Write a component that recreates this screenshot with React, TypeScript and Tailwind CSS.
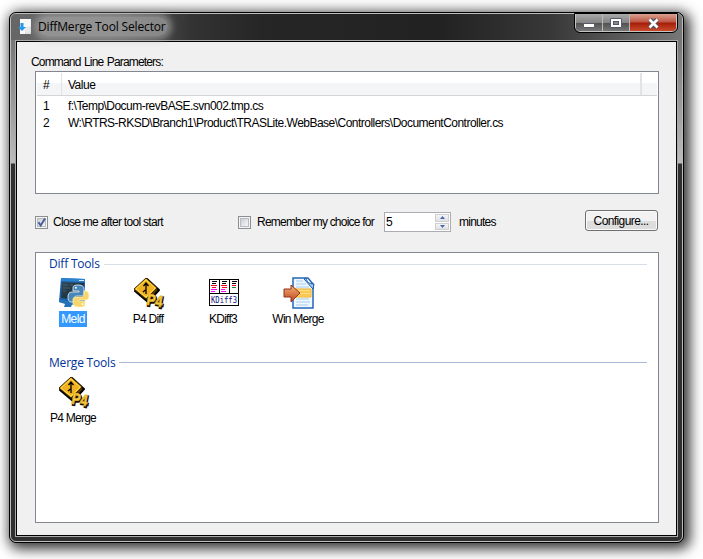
import type { ReactNode } from 'react';

function PythonIcon() {
  return (
    <svg width="32" height="32" viewBox="0 0 32 32" className="block">
      <defs>
        <linearGradient id="screen" x1="0" y1="0" x2="1" y2="1">
          <stop offset="0" stopColor="#334b5a" />
          <stop offset="1" stopColor="#10202c" />
        </linearGradient>
      </defs>
      <path d="M3 1 L27 2 L27 25 L16 28 L1 25 Z" fill="#1c62a9" />
      <path d="M3 1 L27 2 L27 5 L3 4 Z" fill="#2b83cf" />
      <path d="M21 3h5v1h-5z" fill="#d7ebfa" />
      <path d="M4 5 L26 6 L25 23 L3 21 Z" fill="url(#screen)" />
      <path d="M5 8h5M12 8h3M5 11h7M5 14h3" stroke="#445d6b" strokeWidth="1" />
      <path d="M1 22 L15 25 L13 30 L6 30 L7 27 L1 25 Z" fill="#2573b8" />
      <path d="M20 8c-5 0-5 1.500-5 4v2h6v1h-7c-3 0-4 2-4 5s1 5 3 5h3v-3c0-2 1-3 3-3h4c2 0 3-1 3-3v-4c0-2-1-4-6-4z" fill="#4787b8" stroke="#dce8f0" strokeWidth=".9" />
      <path d="M22 30c5 0 5-1.500 5-4v-2h-6v-1h7c2 0 3-2 3-4s-1-5-3-5h-2v3c0 2-1 3-3 3h-5c-2 0-3 1-3 3v3c0 2 1 4 7 4z" fill="#f5d66c" stroke="#fff1b5" strokeWidth=".8" />
      <circle cx="17.800" cy="10.700" r="1" fill="#fff" />
      <circle cx="24.500" cy="27" r="1" fill="#fff" />
    </svg>
  );
}

function P4Icon() {
  return (
    <svg width="32" height="33" viewBox="0 0 32 33" className="block overflow-visible">
      <path d="M14 2 L26 13 L15 25 L2 14 Z" fill="#5b3b00" stroke="#000" strokeWidth="2" strokeLinejoin="round" />
      <path d="M13 1 L24 11 L13 22 L1 12 Z" fill="#f0b020" stroke="#3b2900" strokeWidth="1" strokeLinejoin="round" />
      <path d="M13 3 L22 11 L13 20 L3 12 Z" fill="none" stroke="#ffdc52" strokeWidth="1" />
      <path d="M13 17V7M10.500 9l2.500-3 2.500 3M10 15l2.500-2" fill="none" stroke="#000" strokeWidth="1.300" />
      <g transform="rotate(10 22 22)" className="[font-family:'Liberation_Sans',sans-serif] text-[16px] font-bold">
        <text x="15" y="30" textLength="16" lengthAdjust="spacingAndGlyphs" fill="#170e00" stroke="#170e00" strokeWidth="2">P4</text>
        <text x="14" y="29" textLength="16" lengthAdjust="spacingAndGlyphs" fill="#f7d046" stroke="#e0ad28" strokeWidth=".8">P4</text>
      </g>
    </svg>
  );
}

function KDiffIcon() {
  return (
    <svg width="32" height="32" viewBox="0 0 32 32" shapeRendering="crispEdges" className="block">
      <path d="M1 2h30v27H1z" fill="#000" />
      <path d="M2 3h9v13H2zM12 3h9v13h-9zM22 3h8v13h-8zM2 17h28v11H2z" fill="#fff" />
      <path d="M4 4h5v1h-5zM14 4h5v1h-5zM24 4h5v1h-5zM4 6h4v1h-4zM14 6h4v1h-4zM24 6h4v1h-4z" fill="#000" />
      <path d="M3 8h6v1h-6zM13 8h6v1h-6zM24 8h4v1h-4zM4 10h4v1h-4zM14 10h5v1h-5z" fill="#ff0020" />
      <path d="M24 10h4v1h-4z" fill="#168b39" />
      <path d="M3 12h6v1h-6zM13 12h4v1h-4zM3 14h4v1h-4zM13 14h5v1h-5z" fill="#ff00ff" />
      <text x="3" y="26" textLength="26" lengthAdjust="spacingAndGlyphs" fill="#101080" className="[font-family:'DejaVu_Sans_Mono',monospace] text-[9px]">KDiff3</text>
    </svg>
  );
}

function WinMergeIcon() {
  return (
    <svg width="34" height="32" viewBox="0 0 34 32" className="block">
      <defs>
        <linearGradient id="arrow" x1="0" y1="0" x2="0" y2="1">
          <stop offset="0" stopColor="#f8b178" /><stop offset="1" stopColor="#b9441b" />
        </linearGradient>
      </defs>
      <path d="M11 1h15l5 6v24H11z" fill="#f0f8ff" stroke="#2466bb" strokeWidth="1.500" />
      <path d="M24 1c1 4 3 6 8 6l-1 5-9-10z" fill="#a6cbed" stroke="#1c5aab" />
      <path d="M14 4h7M14 7h10M14 10h13M14 22h13M14 25h14M14 28h12" stroke="#a6cae9" />
      <path d="M12 12h17v8H12z" fill="#ffe17b" stroke="#f2a91f" />
      <path d="M17 15h11M17 18h11" stroke="#f5ae32" />
      <path d="M2 12h7V8l9 8-9 9v-5H2z" fill="url(#arrow)" stroke="#91331d" />
    </svg>
  );
}

function CheckBox({ checked }: { checked?: boolean }) {
  return (
    <span className="flex h-[13px] w-[13px] shrink-0 items-center justify-center border border-[#8e8f8f] bg-[#f4f4f4]">
      <span className="h-[9px] w-[9px] border border-[#b8bdc3] bg-linear-to-br from-[#cbcfd5] to-[#f7f7f7]">
        {checked && (
          <svg width="9" height="9" viewBox="0 0 9 9" className="-mt-px -ml-px block overflow-visible">
            <path d="M1.500 4.200 3.700 7.500 8 .5" fill="none" stroke="#4a5f97" strokeWidth="2" />
          </svg>
        )}
      </span>
    </span>
  );
}

function Group({ name, children, faint }: { name: string; children: ReactNode; faint?: boolean }) {
  return (
    <section className="h-[99px]">
      <div className="flex h-[22px] items-center pr-[11px] pl-[13px]">
        <h2 className="w-[55px] shrink-0 whitespace-nowrap [font-family:'Open_Sans',sans-serif] text-[12px] tracking-[-0.2px] text-[#003399] data-wide:w-[70px]" data-wide={faint ? undefined : true}>{name}</h2>
        <div className={faint ? 'h-px flex-1 bg-[#d5dfe9]' : 'mb-px h-px flex-1 bg-[#a9bad8]'} />
      </div>
      <div className="flex pt-[2px]">{children}</div>
    </section>
  );
}

function Tool({ icon, label, selected }: { icon: ReactNode; label: string; selected?: boolean }) {
  return (
    <div className="flex w-[75px] flex-col items-center">
      <div className="flex h-[34px] items-start justify-center">{icon}</div>
      <span className={selected ? 'mr-px h-[16px] bg-[#3399ff] px-[2px] leading-[16px] tracking-[-0.6px] text-white' : 'mr-px h-[16px] leading-[16px] whitespace-nowrap tracking-[-0.75px]'}>{label}</span>
    </div>
  );
}

export default function App() {
  return (
    <main className="h-[559px] w-[703px] overflow-hidden bg-white pt-[12px] pl-[9px] [font-family:'Liberation_Sans',Arial,sans-serif] text-[12px] text-black">
      <div className="h-[531px] w-[675px] rounded-[7px] border border-black bg-[#303030] shadow-[3px_3px_13px_3px_rgba(0,0,0,0.8)]">
        <div className="h-full rounded-[6px] border border-[#bcbcbc] bg-[linear-gradient(180deg,#777_0px,#777_28px,#bcbcbc_149px,#303030_150px,#303030_100%)] px-[4px]">
          <header className="-mx-[4px] flex h-[26px] justify-between rounded-t-[5px] bg-[linear-gradient(90deg,#666_0,#666_100px,#333_180px,#262626_250px,#222_430px,#383838_540px,#777_100%)]">
            <div className="flex items-start pt-[5px] pl-[7px]">
              <svg width="15" height="17" viewBox="0 0 15 17" className="-mt-px">
                <path d="M2 1h11v15H2z" fill="#f8f8f8" />
                <path d="M7 9h6v7H7z" fill="#ddd" /><path d="M7 11h6M7 13h6M9 9v7M11 9v7" stroke="#fff" strokeWidth=".5" />
                <path d="M2.500 5h3v4h2.500L4 13 0 9h2.500z" fill="#2498e9" />
              </svg>
              <h1 className="-mt-[2px] ml-[5px] h-[19px] w-[130px] rounded-full bg-[#aaa]/65 [font-family:'Open_Sans',sans-serif] text-[12px] leading-[19px] tracking-[-0.15px] whitespace-nowrap shadow-[0_0_6px_4px_rgba(170,170,170,.6)]">DiffMerge Tool Selector</h1>
            </div>
            <div className="mr-[5px] flex h-[18px] overflow-hidden rounded-b-[5px] border border-t-0 border-[#c4c4c4] outline outline-black">
              <div className="flex w-[27px] items-center justify-center border-r border-[#bbb] bg-[linear-gradient(180deg,#aaa_0%,#858585_50%,#505050_52%,#777_100%)]"><span className="mt-[6px] h-[5px] w-[12px] rounded-[1px] border border-[#555968] bg-white" /></div>
              <div className="flex w-[27px] items-center justify-center border-r border-[#bbb] bg-[linear-gradient(180deg,#aaa_0%,#858585_50%,#505050_52%,#777_100%)]">
                <span className="mt-px h-[10px] w-[12px] rounded-[1px] border border-[#555968] bg-white p-[2px]"><span className="block h-full border border-[#555968] bg-[#888]" /></span>
              </div>
              <div className="flex w-[46px] items-center justify-center bg-[linear-gradient(180deg,#dba090_0%,#bd5542_48%,#a51d09_52%,#c94b2b_100%)]">
                <svg width="13" height="11" viewBox="0 0 13 11" className="mt-px"><path d="M3 1.500 10 9.500M10 1.500 3 9.500" stroke="#4e5365" strokeWidth="4.800" /><path d="M2.500 1.500 10.500 9.500M10.500 1.500 2.500 9.500" stroke="#fff" strokeWidth="2.600" /></svg>
              </div>
            </div>
          </header>
          <div className="h-[497px] border border-[#aaa] bg-black p-px">
            <div className="h-full bg-[#f0f0f0] px-[18px] pt-[11px]">
              <p className="-ml-[4px] h-[18px] leading-[18px] tracking-[-0.84px]"><span className="[word-spacing:1px]">Command Line Parameters:</span></p>
              <section className="h-[123px] w-[624px] border border-[#828790] bg-white p-px">
                <div className="flex h-[23px] items-center border-b border-[#d5d5d5] bg-linear-to-b from-white from-45% to-[#f4f5f7] to-45%">
                  <span className="h-full w-[25px] border-r border-[#e2e3e5] pl-[6px] leading-[24px]">#</span>
                  <span className="h-full w-[580px] border-r-2 border-[#e0e3e7] pl-[6px] leading-[24px] tracking-[-0.5px]">Value</span>
                </div>
                <div className="pt-px pl-[6px]">
                  <div className="flex h-[17px] items-center"><span className="w-[25px]">1</span><span className="tracking-[-0.54px]">f:\Temp\Docum-revBASE.svn002.tmp.cs</span></div>
                  <div className="flex h-[17px] items-center"><span className="w-[25px]">2</span><span className="tracking-[-0.52px]">W:\RTRS-RKSD\Branch1\Product\TRASLite.WebBase\Controllers\DocumentController.cs</span></div>
                </div>
              </section>
              <div className="flex h-[58px] items-center pb-[2px]">
                <CheckBox checked />
                <span className="ml-[5px] w-[185px] tracking-[-0.7px]">Close me after tool start</span>
                <CheckBox />
                <span className="ml-[6px] w-[127px] tracking-[-0.78px]">Remember my choice for</span>
                <div className="flex h-[20px] w-[67px] border border-[#abadb3] bg-white pl-[1px]">
                  <span className="flex-1 leading-[18px]">5</span>
                  <span className="mr-px flex w-[14px] flex-col gap-px py-px">
                    {[false, true].map((down) => (
                      <span key={String(down)} className="flex flex-1 items-center justify-center border border-[#cfcfcf] bg-linear-to-b from-[#f4f4f4] to-[#e2e2e2]">
                        <svg width="5" height="3" viewBox="0 0 5 3"><path d={down ? 'M0 0h5L2.500 3z' : 'M2.500 0 5 3H0z'} fill="#4b63b5" /></svg>
                      </span>
                    ))}
                  </span>
                </div>
                <span className="ml-[8px] w-[126px] tracking-[-0.75px]">minutes</span>
                <button className="mb-[3px] h-[21px] w-[73px] rounded-[3px] border border-[#707070] bg-linear-to-b from-[#f2f2f2] from-50% to-[#dddddd] to-50% pt-px pr-px leading-[18px] tracking-[-0.6px] shadow-[inset_0_0_0_1px_#fafafa]">Configure...</button>
              </div>
              <section className="h-[271px] w-[624px] border border-[#828790] bg-white">
                <Group name="Diff Tools" faint>
                  <Tool icon={<PythonIcon />} label="Meld" selected />
                  <Tool icon={<P4Icon />} label="P4 Diff" />
                  <Tool icon={<KDiffIcon />} label="KDiff3" />
                  <Tool icon={<WinMergeIcon />} label="Win Merge" />
                </Group>
                <Group name="Merge Tools"><Tool icon={<P4Icon />} label="P4 Merge" /></Group>
              </section>
            </div>
          </div>
        </div>
      </div>
    </main>
  );
}
